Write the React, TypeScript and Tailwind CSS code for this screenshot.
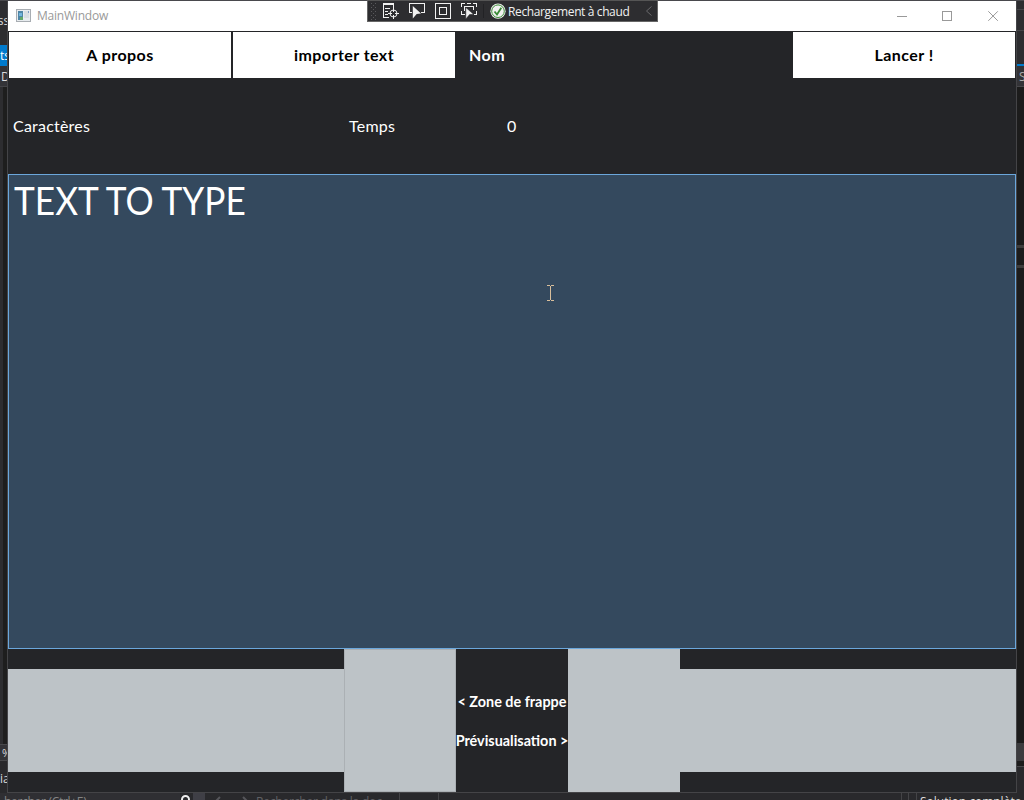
import React from "react";

function TitleBar() {
  return (
    <header className="relative flex h-[30px] shrink-0 items-center bg-white">
      <svg width="16" height="14" viewBox="0 0 16 14" className="ml-2" shapeRendering="crispEdges">
        <rect x=".5" y=".5" width="14" height="12" fill="#e8ecef" stroke="#a8adb2" />
        <rect x="2" y="2" width="5" height="9" fill="#4f86a6" />
        <rect x="3" y="4" width="3" height="3" fill="#73b6dc" />
        <rect x="4" y="8" width="3" height="3" fill="#63a86b" />
        <rect x="8" y="2" width="5" height="7" fill="#d8dee2" />
        <rect x="12" y="2" width="1" height="2" fill="#7f9cc0" />
      </svg>
      <span className="ml-[5px] font-['Open_Sans',sans-serif] text-[12px] leading-4 tracking-[-0.22px] text-[#999]">
        MainWindow
      </span>
      <svg width="104" height="14" viewBox="0 0 104 14" className="ml-auto mr-[16px]" fill="none" stroke="#999">
        <path d="M1 7.5h10M46.5 2.5h9v9h-9z" shapeRendering="crispEdges" />
        <path d="m92.3 2.3 9.5 9.5m0-9.5-9.5 9.5" />
      </svg>
      <DebugBar />
    </header>
  );
}

function DebugBar() {
  return (
    <div className="absolute left-[359px] top-[-1px] flex h-[22px] w-[291px] items-center border border-[#666] border-t-[#555] bg-[#2d2d30]">
      <svg width="140" height="20" viewBox="368 1 140 20" fill="none" stroke="#f1f1f1" className="shrink-0">
        <path d="M371.5 3v17M375.5 3v17" stroke="#59595c" strokeDasharray="1 3" />
        <path d="M373.5 5v15" stroke="#59595c" strokeDasharray="1 3" />
        <g shapeRendering="crispEdges">
          <path d="M383 3.5h11M383 4.5h11M383.5 5v12M393.5 5v3M385 8.5h5M385 11.5h3M385 14.5h3M383 17.5h6" />
          <path d="M412 12.5h-2.5v-9h15v9h-4" />
          <path d="M435.5 3.5h15v15h-15zM439.5 7.5h7v7h-7z" />
          <path d="M461.5 7V3.5h3.5M473 3.5h3.5V7M476.5 11v3.5H474M465 14.5h-3.5V11M464.5 11V6.5h9V10M467 3.5h4" />
        </g>
        <circle cx="393.5" cy="13.5" r="3.5" />
        <path d="M393.5 8v4M393.5 15v4M388 13.5h4M395 13.5h4" />
        <path d="m412.8 6 8.2 7.5-4.3.4-3.9 4.6z" fill="#f1f1f1" stroke="none" />
        <path d="m465.8 7.5 7.7 6.7-4 .4-3.7 4.4z" fill="#f1f1f1" stroke="#2d2d30" strokeWidth=".5" />
        <path d="M483.5 4v14" stroke="#222225" />
        <circle cx="498" cy="11.2" r="7.6" fill="#f1f1f1" stroke="none" />
        <circle cx="498" cy="11.2" r="6.3" stroke="#388a34" strokeWidth="1" />
        <path d="m494.5 11.5 2.5 3 4.3-6.8" stroke="#388a34" strokeWidth="1.8" />
      </svg>
      <span className="whitespace-nowrap pt-[2px] font-['Open_Sans',sans-serif] text-[12px] leading-4 tracking-[-0.38px] text-[#f1f1f1]">
        Rechargement à chaud
      </span>
      <svg width="8" height="10" viewBox="0 0 8 10" className="ml-auto mr-[4px]" fill="none" stroke="#68686b">
        <path d="M6.5 .5 1.5 5l5 4.5" />
      </svg>
    </div>
  );
}

function TopButton({ children }: { children: React.ReactNode }) {
  return (
    <button className="m-px flex h-[46px] items-center justify-center bg-white pb-px text-[16px] font-bold tracking-[0.45px] text-black">
      {children}
    </button>
  );
}

function MainWindow() {
  return (
    <div className="flex w-[1010px] shrink-0 flex-col border-x border-b border-[#444447] bg-[#242528] font-[Lato,sans-serif]">
      <TitleBar />
      <div className="grid h-[48px] shrink-0 grid-cols-[224px_224px_336px_224px]">
        <TopButton>A propos</TopButton>
        <TopButton>importer text</TopButton>
        <div className="flex items-center pb-px pl-[13px] text-[16px] font-bold tracking-[0.45px] text-white">Nom</div>
        <TopButton>Lancer !</TopButton>
      </div>
      <div className="grid h-[95px] shrink-0 grid-cols-[336px_112px_560px] items-center pb-[2px] text-[16px] tracking-[0.22px] text-white">
        <span className="pl-[5px]">Caractères</span>
        <span className="pl-[5px]">Temps</span>
        <span className="pl-[51px]">0</span>
      </div>
      <div className="relative h-[475px] shrink-0 border border-[#6ba7dc] bg-[#34495e] pl-[5px] pt-[2px] text-[38px] leading-[46px] text-white">
        <span className="inline-block origin-left scale-x-[0.927] whitespace-nowrap">TEXT TO TYPE</span>
        <svg width="9" height="16" viewBox="0 0 9 16" className="absolute left-[537px] top-[110px]" fill="none" stroke="#d8be9b" shapeRendering="crispEdges">
          <path d="M1 .5h3M5 .5h3M4.5 1v14M1 15.5h3M5 15.5h3" />
        </svg>
      </div>
      <div className="grid h-[143px] shrink-0 grid-cols-[336px_112px_112px_112px_336px] items-center">
        <div className="mb-px h-[103px] bg-[#bdc3c7]" />
        <div className="h-full border border-[#abb0b4] bg-[#bdc3c7]" />
        <div className="flex h-full flex-col items-center justify-center gap-[19px] whitespace-nowrap pt-[2px] text-[14.4px] font-bold leading-5 text-white">
          <span>&lt; Zone de frappe</span>
          <span>Prévisualisation &gt;</span>
        </div>
        <div className="h-full bg-[#bdc3c7]" />
        <div className="mb-px h-[103px] bg-[#bdc3c7]" />
      </div>
    </div>
  );
}

function LeftEdge() {
  return (
    <div className="flex w-[7px] shrink-0 flex-col overflow-hidden whitespace-nowrap bg-[#1e1e1e] font-['Open_Sans',sans-serif] text-[12px] leading-4 text-[#ddd]">
      <div className="h-[44px] shrink-0 bg-[#2d2d30] pt-[12px]"><span className="-ml-[9px]">ess</span></div>
      <div className="h-[21px] shrink-0 bg-[#007acc] pt-[3px] text-white">ts</div>
      <div className="h-[21px] shrink-0 border-b border-[#444447] bg-[#333337] pl-px pt-[3px]">D</div>
      <div className="flex-1 border-l-[3px] border-[#2d2d30]" />
      <div className="h-[17px] shrink-0 border-y border-[#48484b] bg-[#333337] pl-[2px] text-[11px]">%</div>
      <div className="h-[32px] shrink-0 bg-[#29292c] pt-[10px]">ia</div>
    </div>
  );
}

function RightEdge() {
  return (
    <div className="flex w-[7px] shrink-0 flex-col overflow-hidden bg-[#1c1c1c] font-['Open_Sans',sans-serif] text-[12px] leading-4 text-[#aaa]">
      <div className="h-[63px] shrink-0 bg-[#2d2d30] pt-[8px]">
        <div className="h-[22px] border-y border-[#444447]" />
      </div>
      <div className="h-[23px] shrink-0 border-b border-t-2 border-b-[#48484b] border-t-[#007acc] bg-[#333337] pl-[2px] pt-[3px]">S</div>
      <div className="h-[158px] shrink-0" />
      <div className="h-[23px] shrink-0 border-y-[3px] border-[#3c3c3c]" />
      <div className="flex-1" />
      <div className="h-[18px] shrink-0 bg-[#3b3b3e]" />
      <div className="mt-[5px] h-[27px] shrink-0 border-t border-[#48484b] bg-[#29292c]" />
    </div>
  );
}

function BottomStrip() {
  return (
    <footer className="flex h-[7px] shrink-0 overflow-hidden whitespace-nowrap bg-[#29292c] font-['Open_Sans',sans-serif] text-[12px] leading-[18px] text-[#858585]">
      <div className="w-[180px] shrink-0 bg-[#2f2f33] pl-[4px] tracking-[-0.3px]">hercher (Ctrl+E)</div>
      <svg width="12" height="7" viewBox="0 0 12 7" fill="none" stroke="#eee" strokeWidth="2" className="shrink-0">
        <circle cx="5.5" cy="6.5" r="3.5" />
      </svg>
      <div className="ml-px h-full w-[12px] shrink-0 bg-[#3f3f46]" />
      <svg width="51" height="7" viewBox="0 0 51 7" fill="none" stroke="#55555a" strokeWidth="2" className="shrink-0">
        <path d="m15 4-4 4M38 4l4 4" />
      </svg>
      <div className="w-[144px] shrink-0 overflow-hidden border-r border-[#444447] tracking-[-0.2px] text-[#606064]">Rechercher dans la doc</div>
      <div className="w-[39px] shrink-0 border-r border-[#444447]" />
      <div className="flex-1" />
      <div className="h-full w-[8px] border-x border-[#444447]" />
      <div className="ml-[7px] w-[108px] shrink-0 overflow-hidden border-l border-[#444447] pl-[3px] text-[#ddd]">Solution complète</div>
    </footer>
  );
}

export default function App() {
  return (
    <div className="flex h-[800px] w-[1024px] flex-col overflow-hidden bg-[#2d2d30]">
      <div className="h-px shrink-0 bg-[#49494d]" />
      <main className="flex h-[792px] shrink-0">
        <LeftEdge />
        <MainWindow />
        <RightEdge />
      </main>
      <BottomStrip />
    </div>
  );
}
